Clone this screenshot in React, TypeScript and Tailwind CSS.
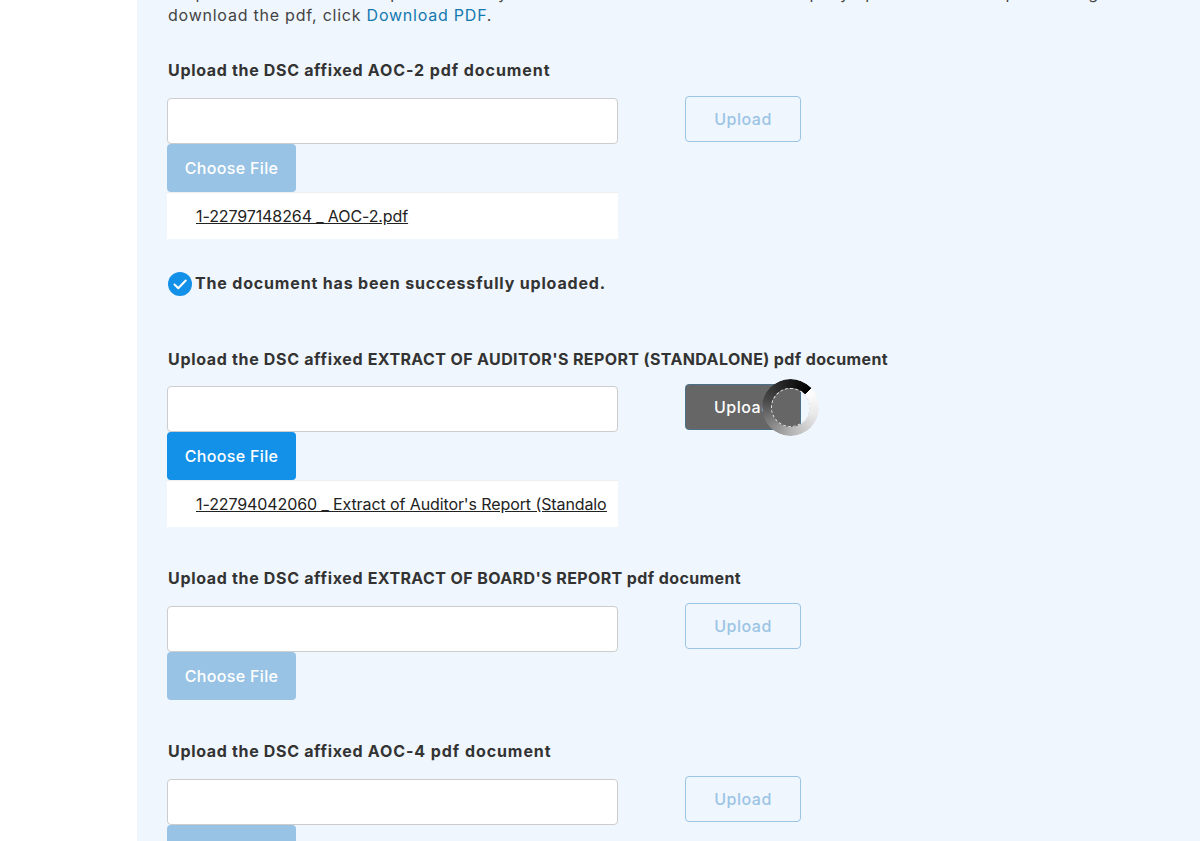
const fontStack = "font-['Inter','Liberation_Sans',sans-serif]";

function UploadRow({
  label,
  labelTracking,
  active,
  fileName,
  success,
  className,
}: {
  label: string;
  labelTracking: string;
  active?: boolean;
  fileName?: string;
  success?: boolean;
  className?: string;
}) {
  return (
    <section className={className}>
      <h3 className="ml-[1px] text-[16px] leading-[24px] font-bold whitespace-nowrap text-[#333333]">
        <span className="tracking-[0.67px]">Upload the DSC affixed </span>
        <span className={labelTracking}>{label}</span>
      </h3>
      <div className={`flex items-start ${active ? "mt-[15px]" : "mt-[16px]"}`}>
        <div className="w-[451px]">
          <div className="h-[46px] rounded-[4px] border border-[#cccccc] bg-white" />
          <button
            type="button"
            className={`block h-[48px] w-[129px] rounded-[4px] text-[16px] font-medium tracking-[0.35px] text-white ${
              active ? "bg-[#1391e8]" : "bg-[#99c3e4]"
            }`}
          >
            Choose File
          </button>
          {fileName && (
            <div className="h-[47px] border-t border-[#eeeeee] bg-white pt-[11px] pr-[11px] pl-[29px] text-[16px] leading-[24px] tracking-[-0.1px] whitespace-nowrap text-[#222222]">
              <div className="overflow-hidden">
                <span className="underline">{fileName}</span>
              </div>
            </div>
          )}
        </div>
        <div className={`relative ml-[67px] ${fileName ? "-mt-[2px]" : "-mt-[3px]"}`}>
          {active ? (
            <button
              type="button"
              className="h-[46px] w-[116px] overflow-hidden rounded-[4px] border border-[#4b7188] bg-[#666666] pr-[30px] pl-[28px] text-left text-[16px] font-medium tracking-[0.5px] text-white"
            >
              Upload
            </button>
          ) : (
            <button
              type="button"
              className="h-[46px] w-[116px] rounded-[4px] border border-[#9bc4e5] text-[16px] font-medium tracking-[0.5px] text-[#9bc4e5]"
            >
              Upload
            </button>
          )}
          {active && (
            <>
              {/* spinner ring, the hole shows what lies behind */}
              <div className="absolute top-[-5px] left-[77px] h-[57px] w-[57px] rounded-full bg-[conic-gradient(from_48deg,#ffffff_0deg,#e8e8e8_60deg,#b4b4b4_130deg,#7c7c7c_190deg,#484848_240deg,#262626_290deg,#000000_359deg,#ffffff_360deg)] [mask-image:radial-gradient(circle,transparent_19px,black_20px)]" />
              <div className="absolute top-[4px] left-[86px] h-[39px] w-[39px] rounded-full border border-dashed border-[#e4e4e4]" />
            </>
          )}
        </div>
      </div>
      {success && (
        <div className="mt-[33px] flex h-[24px] items-center pl-[1px]">
          <svg width="24" height="24" viewBox="0 0 24 24" className="shrink-0">
            <circle cx="12" cy="12" r="12" fill="#1391e8" />
            <path d="M6.5 12.5l3.8 3.8 7.4-7.8" fill="none" stroke="white" strokeWidth="2" strokeLinecap="round" strokeLinejoin="round" />
          </svg>
          <span className="-mt-[2px] ml-[3px] text-[16px] font-bold tracking-[0.83px] whitespace-nowrap text-[#333333]">
            The document has been successfully uploaded.
          </span>
        </div>
      )}
    </section>
  );
}

export default function App() {
  return (
    <div className={`h-[841px] w-[1200px] overflow-hidden bg-white ${fontStack}`}>
      <main className="ml-[137px] h-full overflow-hidden bg-[#eff6fd] pl-[30px]">
        <p className="-mt-[18px] ml-[1px] text-[16px] leading-[22px] tracking-[0.77px] text-[#444444]">
          <span className="block whitespace-nowrap">
            Prepare the documents as per the Act by the director of the listed Indian company upload the bound pdf and sign
          </span>
          <span className="block">
            download the pdf, click <a className="text-[#1478b0]">Download PDF</a>.
          </span>
        </p>
        <div className="flex flex-col">
          <UploadRow
            className="mt-[32px]"
            label="AOC-2 pdf document"
            labelTracking="tracking-[0.93px]"
            fileName="1-22797148264 _ AOC-2.pdf"
            success
          />
          <UploadRow
            className="mt-[51px]"
            label="EXTRACT OF AUDITOR'S REPORT (STANDALONE) pdf document"
            labelTracking="tracking-[0.38px]"
            active
            fileName="1-22794042060 _ Extract of Auditor's Report (Standalone).pdf"
          />
          <UploadRow
            className="mt-[39px]"
            label="EXTRACT OF BOARD'S REPORT pdf document"
            labelTracking="tracking-[0.39px]"
          />
          <UploadRow
            className="mt-[39px]"
            label="AOC-4 pdf document"
            labelTracking="tracking-[0.93px]"
          />
        </div>
      </main>
    </div>
  );
}
